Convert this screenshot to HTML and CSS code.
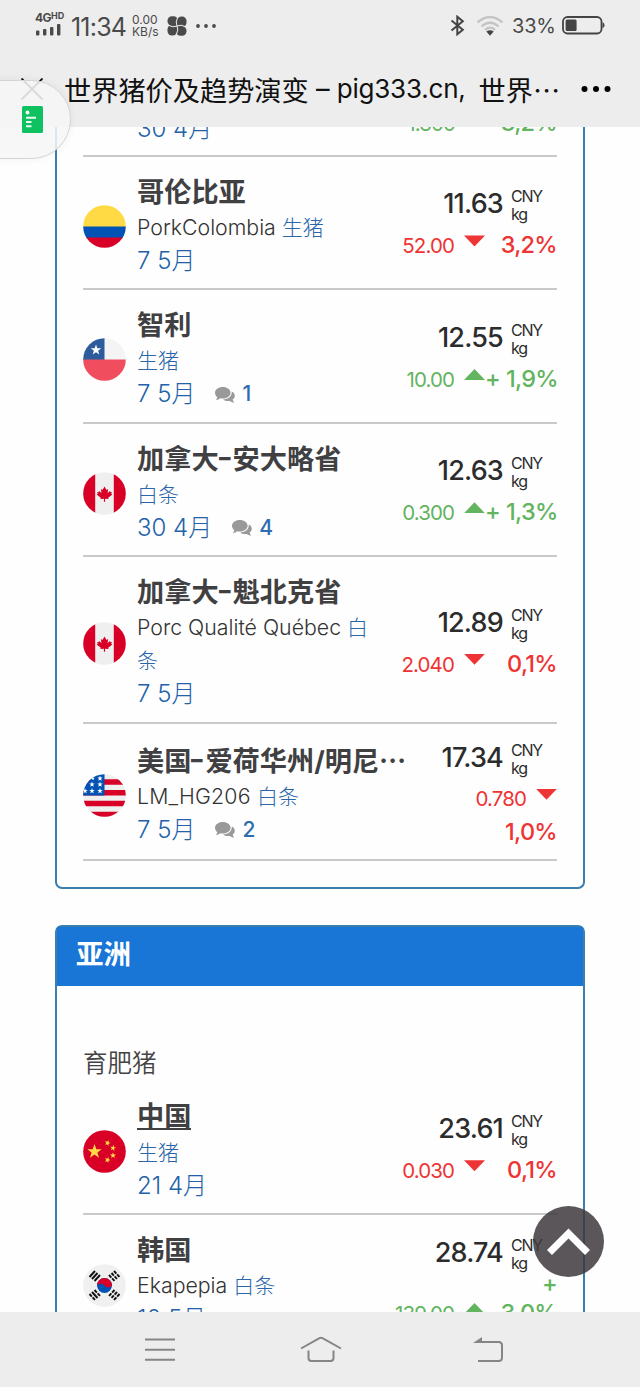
FILE: index.html
```html
<!DOCTYPE html>
<html lang="zh-CN">
<head>
<meta charset="utf-8">
<title>世界猪价及趋势演变</title>
<link rel="stylesheet" href="styles.css">
</head>
<body>
<svg class="defs" aria-hidden="true">
  <defs>
    <clipPath id="disc"><circle cx="21.5" cy="21.5" r="21.3"/></clipPath>
    <path id="star" d="M0-10 2.4-3.1 9.5-3.1 3.8 1.2 5.9 8.1 0 4-5.9 8.1-3.8 1.2-9.5-3.1-2.4-3.1Z"/>
    <symbol id="flag-ca" viewBox="0 0 43 43"><g clip-path="url(#disc)"><path fill="#efefef" d="M0 0h43v43H0z"/><path fill="#d80027" d="M0 0h12.2v43H0zM30.800 0H43v43H30.800z"/><path fill="#d80027" d="M21.500 14.500l2 3.400 1.700-.9-.7 4 2.500-2 .5 1.200 1.400-.3-.7 2 1.200.7-4.200 3.200.4 1.300-3.500-.4v3h-1.200v-3l-3.500.4.4-1.300-4.200-3.200 1.200-.7-.7-2 1.400.3.500-1.200 2.500 2-.7-4 1.700.9z"/></g></symbol>
    <symbol id="chat" viewBox="0 0 20 16"><path fill="#999" d="M7.800 0C12.200 0 15.600 2.600 15.600 5.800S12.200 11.600 7.800 11.600c-.9 0-1.800-.1-2.600-.3C4 12.300 2.500 12.900.8 12.900c.8-.8 1.300-1.700 1.500-2.700C.9 9.100 0 7.500 0 5.800 0 2.600 3.400 0 7.800 0z"/><path fill="#999" d="M16.800 4.600c1.900 1 3 2.500 3 4.200 0 1.500-.8 2.900-2.100 3.800.2 1.100.7 2 1.400 2.800-1.700 0-3.200-.6-4.300-1.500-2.500.5-5-.1-6.600-1.400 4.900-.1 8.900-3 8.600-7.900z"/></symbol>
  </defs>
</svg>
<div class="phone">
  <header class="top">
    <div class="status">
      <div class="signal"><span class="net">4G<small>HD</small></span>
        <svg width="27" height="12" viewBox="0 0 27 12" fill="#4a4a4a"><rect x="1" y="6.500" width="3.400" height="5" rx="1"/><rect x="8" y="5" width="3.400" height="6.500" rx="1"/><rect x="15" y="3" width="3.400" height="8.500" rx="1"/><rect x="22" y="0" width="3.400" height="11.500" rx="1"/></svg>
      </div>
      <span class="clock">11:34</span>
      <span class="speed">0.00<br>KB/s</span>
      <svg class="fan" width="20" height="20" viewBox="0 0 20 20"><g fill="#4a4a4a"><rect x=".5" y=".3" width="10.500" height="9.500" rx="4.500"/><rect x="10" y=".5" width="9.500" height="10.500" rx="4.500"/><rect x="9" y="10.200" width="10.500" height="9.500" rx="4.500"/><rect x=".5" y="9" width="9.500" height="10.500" rx="4.500"/><circle cx="10" cy="10" r="3"/></g><path fill="none" stroke="#ededed" stroke-width="1" d="M10 10Q8 6.500 10.800 1M10 10Q13.500 8 19 10.800M10 10Q12 13.500 9.200 19M10 10Q6.500 12 1 9.200"/></svg>
      <svg class="more-sm" width="22" height="6" viewBox="0 0 22 6" fill="#4a4a4a"><circle cx="3" cy="3" r="1.900"/><circle cx="11" cy="3" r="1.900"/><circle cx="19" cy="3" r="1.900"/></svg>
      <span class="spacer"></span>
      <svg width="15" height="21" viewBox="0 0 15 21" fill="none" stroke="#444" stroke-width="2"><path d="M1.500 5.500 12.800 14.800 7.300 19.300V1.700l5.500 4.500L1.500 15.500"/></svg>
      <svg class="wifi" width="28" height="20" viewBox="0 0 28 20" fill="none" stroke="#c4c4c4" stroke-width="2.300"><path d="M1.500 6.500Q14-4.500 26.500 6.500M5.500 10.500Q14 3 22.500 10.500M9 13.800Q14 9.500 19 13.800"/><path fill="#444" stroke="none" d="M10.300 15.500Q14 12.800 17.700 15.500L14 19.700z"/></svg>
      <span class="pct-batt">33%</span>
      <svg width="43" height="19" viewBox="0 0 43 19"><rect x="1" y="1" width="38.500" height="16.500" rx="4.500" fill="none" stroke="#444" stroke-width="1.800"/><rect x="3.600" y="3.500" width="11" height="11.500" rx="1.500" fill="#444"/><path fill="#444" d="M40.500 6.200q2 .5 2 3t-2 3z"/></svg>
    </div>
    <div class="titlebar">
      <svg class="close" width="22" height="22" viewBox="0 0 22 22" stroke="#111" stroke-width="1.900" fill="none"><path d="M.5.500l21 21M21.500.500l-21 21"/></svg>
      <div class="page-title"><span class="cjk">世界猪价及趋势演变</span><span class="dash">–</span><span class="site">pig333.cn,</span><span class="cjk">世界</span><span class="cjk dots">⋯</span></div>
      <svg class="more" width="30" height="8" viewBox="0 0 30 8"><circle cx="3.500" cy="4" r="3"/><circle cx="15" cy="4" r="3"/><circle cx="26.500" cy="4" r="3"/></svg>
    </div>
  </header>

  <main class="page">
    <section class="card card-first">
      <article class="row row-cut">
        <div class="date">30 4月</div>
        <div class="trend up"><span class="amount">1.300</span><span class="pct">3,2%</span></div>
      </article>

      <article class="row">
        <svg class="flag" viewBox="0 0 43 43"><g clip-path="url(#disc)"><path fill="#ffda44" d="M0 0h43v22H0z"/><path fill="#0052b4" d="M0 21.500h43v12H0z"/><path fill="#d80027" d="M0 32.500h43V43H0z"/></g></svg>
        <div class="info">
          <h3>哥伦比亚</h3>
          <p class="src">PorkColombia <a>生猪</a></p>
          <p class="date">7 5月</p>
        </div>
        <div class="quote">
          <div class="price"><b>11.63</b><span>CNY<br>kg</span></div>
          <div class="trend down"><span class="amount">52.00</span><i></i><span class="pct">3,2%</span></div>
        </div>
      </article>

      <article class="row">
        <svg class="flag" viewBox="0 0 43 43"><g clip-path="url(#disc)"><path fill="#f4f4f4" d="M0 0h43v22H0z"/><path fill="#2d5c9c" d="M0 0h21.500v22H0z"/><path fill="#f04e5e" d="M0 21.500h43V43H0z"/><use href="#star" fill="#fff" transform="translate(13 12) scale(.56)"/></g></svg>
        <div class="info">
          <h3>智利</h3>
          <p class="src"><a>生猪</a></p>
          <p class="date">7 5月<svg class="chat"><use href="#chat"/></svg><em>1</em></p>
        </div>
        <div class="quote">
          <div class="price"><b>12.55</b><span>CNY<br>kg</span></div>
          <div class="trend up"><span class="amount">10.00</span><i></i><span class="pct"><u>+</u>1,9%</span></div>
        </div>
      </article>

      <article class="row">
        <svg class="flag"><use href="#flag-ca"/></svg>
        <div class="info">
          <h3>加拿大<s>–</s>安大略省</h3>
          <p class="src"><a>白条</a></p>
          <p class="date">30 4月<svg class="chat"><use href="#chat"/></svg><em>4</em></p>
        </div>
        <div class="quote">
          <div class="price"><b>12.63</b><span>CNY<br>kg</span></div>
          <div class="trend up"><span class="amount">0.300</span><i></i><span class="pct"><u>+</u>1,3%</span></div>
        </div>
      </article>

      <article class="row row-wrap">
        <svg class="flag"><use href="#flag-ca"/></svg>
        <div class="info">
          <h3>加拿大<s>–</s>魁北克省</h3>
          <p class="src">Porc Qualité Québec <a>白<br>条</a></p>
          <p class="date">7 5月</p>
        </div>
        <div class="quote">
          <div class="price"><b>12.89</b><span>CNY<br>kg</span></div>
          <div class="trend down"><span class="amount">2.040</span><i></i><span class="pct">0,1%</span></div>
        </div>
      </article>

      <article class="row row-tall">
        <svg class="flag" viewBox="0 0 43 43"><g clip-path="url(#disc)"><path fill="#efefef" d="M0 0h43v43H0z"/><path fill="#d80027" d="M0 5.300h43v5.500H0zM0 16h43v5.500H0zM0 26.800h43v5.500H0zM0 37.800h43V43H0z"/><path fill="#0052b4" d="M0 0h21.500v21.500H0z"/><g fill="#fff"><use href="#star" transform="translate(17 4.500) scale(.29)"/><use href="#star" transform="translate(9 10.500) scale(.29)"/><use href="#star" transform="translate(17 10.500) scale(.29)"/><use href="#star" transform="translate(2 17) scale(.29)"/><use href="#star" transform="translate(9 17) scale(.29)"/><use href="#star" transform="translate(17 17) scale(.29)"/><use href="#star" transform="translate(10 4.500) scale(.2)"/></g></g></svg>
        <div class="info">
          <h3>美国<s>–</s>爱荷华州<q>/</q>明尼⋯</h3>
          <p class="src wide">LM_HG206 <a>白条</a></p>
          <p class="date">7 5月<svg class="chat"><use href="#chat"/></svg><em>2</em></p>
        </div>
        <div class="quote">
          <div class="price"><b>17.34</b><span>CNY<br>kg</span></div>
          <div class="trend down"><span class="amount">0.780</span><i></i></div>
          <div class="trend down"><span class="pct">1,0%</span></div>
        </div>
      </article>
    </section>

    <section class="card">
      <h2>亚洲</h2>
      <p class="group">育肥猪</p>
      <article class="row">
        <svg class="flag" viewBox="0 0 43 43"><g clip-path="url(#disc)"><path fill="#d80027" d="M0 0h43v43H0z"/><g fill="#ffda44"><use href="#star" transform="translate(11.500 21.500) scale(.76)"/><use href="#star" transform="translate(24.500 13) rotate(20) scale(.32)"/><use href="#star" transform="translate(30 18) rotate(10) scale(.32)"/><use href="#star" transform="translate(30 25.500) scale(.32)"/><use href="#star" transform="translate(24.500 30) rotate(20) scale(.32)"/></g></g></svg>
        <div class="info">
          <h3><span class="active">中国</span></h3>
          <p class="src"><a>生猪</a></p>
          <p class="date">21 4月</p>
        </div>
        <div class="quote">
          <div class="price"><b>23.61</b><span>CNY<br>kg</span></div>
          <div class="trend down"><span class="amount">0.030</span><i></i><span class="pct">0,1%</span></div>
        </div>
      </article>
      <article class="row row-plus">
        <svg class="flag" viewBox="0 0 43 43"><circle cx="21.500" cy="21.500" r="21.300" fill="#f0f0f0"/><circle cx="21.500" cy="21.500" r="7.500" fill="#0052b4"/><path fill="#d80027" d="M14 21.500a7.500 7.500 0 0 1 15 0c-1.500 2.500-5.500 2.500-7.500 0s-6-2-7.500 0z"/><g fill="none" stroke="#111" stroke-width="1.900"><path d="M6.500 13l5.500-6M9 15l5.500-6M11.500 17l5.500-6"/><path d="M31 7l5.500 6M28.500 9l5.500 6M26 11l5.500 6" stroke-dasharray="3.500 1.100"/><path d="M6.500 30l5.500 6M11.500 26l5.500 6" stroke-dasharray="3.500 1.100"/><path d="M9 28l5.500 6"/><path d="M36.500 30l-5.500 6M34 28l-5.500 6M31.500 26l-5.500 6" stroke-dasharray="3.500 1.100"/></g></svg>
        <div class="info">
          <h3>韩国</h3>
          <p class="src">Ekapepia <a>白条</a></p>
          <p class="date">10 5月</p>
        </div>
        <div class="quote">
          <div class="price"><b>28.74</b><span>CNY<br>kg</span></div>
          <div class="trend up plus-line"><span class="pct">+</span></div>
          <div class="trend up last-line"><span class="amount">139.00</span><i></i><span class="pct">3,0%</span></div>
        </div>
      </article>
    </section>
  </main>

  <nav class="navbar">
    <svg width="30" height="26" viewBox="0 0 30 26" fill="none" stroke="#858585" stroke-width="2"><path d="M0 2.500h30M0 12.700h30M0 22.800h30"/></svg>
    <svg class="home" width="42" height="27" viewBox="0 0 42 27" fill="none" stroke="#858585" stroke-width="2"><path d="M1 12.500 19.500 2.200q1.500-.8 3 0L41 12.500M8.500 14.500v7.500q0 3 3 3h19q3 0 3-3v-7.500"/></svg>
    <svg width="31" height="27" viewBox="0 0 31 27" fill="none" stroke="#858585" stroke-width="2"><path d="M5 25h20.500q3.500 0 3.500-3.500v-12Q29 6 25.500 6H3"/><path fill="#858585" stroke="none" d="M0 7 9 1v6z"/></svg>
  </nav>

  <div class="float-tab"><svg width="21" height="27" viewBox="0 0 21 27"><rect width="21" height="27" rx="1.500" fill="#0fc160"/><circle cx="5.500" cy="6.500" r="1.900" fill="#fff"/><path stroke="#e9faef" stroke-width="1.900" d="M4 11.800h10M4 16h5.500M4 20.200h5.500"/></svg></div>
  <div class="to-top"><svg width="43" height="28" viewBox="0 0 43 28" fill="none" stroke="#fff" stroke-width="7"><path d="M2.500 24.500 21.500 5.500l19 19"/></svg></div>
</div>
</body>
</html>
```
FILE: styles.css
```css
* { box-sizing: border-box; margin: 0; padding: 0; }

body {
  background: #fefefe;
  font-family: Inter, "Noto Sans CJK SC", sans-serif;
  color: #2c2c2c;
}

.defs { position: absolute; width: 0; height: 0; }

.phone {
  position: relative;
  display: flex;
  flex-direction: column;
  width: 640px;
  height: 1387px;
  overflow: hidden;
}

/* status bar and browser title */
.top { height: 127px; flex: none; background: #ededed; }

.status {
  display: flex;
  align-items: center;
  height: 51px;
  padding: 0 35px 0 35px;
  color: #4a4a4a;
}
.signal { display: flex; flex-direction: column; width: 28px; margin-top: -3px; }
.net { display: flex; align-items: flex-start; font-size: 12px; font-weight: 700; line-height: 11px; letter-spacing: -.6px; }
.net small { font-size: 9px; line-height: 7px; letter-spacing: 0; }
.signal svg { margin-top: 1px; }
.clock { width: 60px; margin-left: 8px; font-size: 25px; letter-spacing: -.8px; white-space: nowrap; padding-top: 2px; }
.speed { width: 30px; margin-left: 1px; font-size: 12px; line-height: 12px; }
.fan { margin-left: 5px; }
.more-sm { margin-left: 8px; }
.spacer { flex: 1; }
.wifi { margin-left: 11px; margin-right: 8px; }
.pct-batt { width: 43px; font-size: 20px; letter-spacing: -.2px; margin-right: 7px; }

.titlebar { display: flex; align-items: center; height: 76px; padding: 0 29px 0 21px; }
.close, .more { flex: none; }
.page-title {
  display: flex;
  align-items: center;
  width: 517px;
  padding-left: 21px;
  font-size: 27.2px;
  line-height: 40px;
  color: #111;
  white-space: nowrap;
}
.page-title .cjk { font-family: "Noto Sans CJK SC", sans-serif; }
.dash { width: 28px; text-align: center; }
.site { width: 142px; font-size: 26px; letter-spacing: -.2px; }
.dots { width: 27px; }
.more { margin-left: 20.500px; margin-top: -1px; }

/* scrolled page */
.page { height: 1185px; flex: none; overflow: hidden; padding: 0 55px; }

.card {
  border: 2px solid #3a7fae;
  border-radius: 7px;
  padding: 0 26px;
  height: 500px;
}
.card-first {
  border-top: 0;
  border-radius: 0 0 7px 7px;
  height: 762px;
  margin-bottom: 36px;
}
.card h2 {
  height: 58.500px;
  margin: 0 -26px;
  padding-left: 19px;
  background: #1976d7;
  color: #fff;
  font-size: 27.5px;
  line-height: 54px;
}
.group { height: 96px; padding-top: 59px; font-size: 24.5px; line-height: 36px; color: #444; font-weight: 350; }

.row {
  display: flex;
  align-items: center;
  height: 133.4px;
  border-bottom: 2px solid #c9c9c9;
}
.row-cut { height: 29.800px; align-items: flex-end; justify-content: space-between; overflow: hidden; }
.row-cut .date { margin-left: 54px; margin-bottom: 10px; }
.row-cut .trend { margin-bottom: 15px; gap: 30px; }
.row-cut .pct { width: 72px; }
.row-wrap { height: 167.4px; }
.row-tall { height: 136.800px; }
.row-plus { height: 150px; align-items: flex-start; }

.flag { flex: none; width: 43px; height: 43px; margin-top: 8px; }
.row-tall .flag { margin-top: 8px; }
.row-plus .flag { margin-top: 49px; }
.info { flex: none; align-self: flex-start; width: 282px; margin: 17px 0 0 11px; white-space: nowrap; }
.row-tall .info { margin-top: 18.500px; }
.info h3 { font-size: 27.2px; line-height: 38px; height: 38px; color: #404042; font-weight: 700; }
.info h3 s { display: inline-block; width: 14px; text-decoration: none; transform: translateY(-2px) scaleX(.85); transform-origin: left; }
.info h3 q { quotes: none; }
.active { border-bottom: 2px solid #404042; display: inline-block; height: 31px; line-height: 36px; vertical-align: top; }
.src { margin-top: -1px; font-size: 21.3px; line-height: 33.500px; font-weight: 300; color: #333; }
.src.wide { letter-spacing: .2px; }
.src a { color: #2b66ab; font-size: 21px; }
.date { display: flex; align-items: center; font-size: 24px; line-height: 33px; margin-top: -.5px; font-weight: 300; color: #2361a9; }
.date em { font-style: normal; font-size: 21px; font-weight: 500; color: #2c6cb0; }
.chat { width: 20px; height: 16px; margin: 2px 7px 0 20px; }

.quote { flex: none; width: 137px; margin-bottom: 4px; margin-left: auto; display: flex; flex-direction: column; align-items: flex-end; }
.row-wrap .quote { margin-bottom: 2px; }
.row-tall .quote { margin-bottom: 3px; }
.row-plus .quote { margin-top: 12px; }
.price { display: flex; justify-content: flex-end; align-items: center; height: 51px; }
.price b { font-size: 27px; font-weight: 450; letter-spacing: -.8px; }
.price span { width: 46px; margin-left: 8px; font-size: 16px; line-height: 18px; letter-spacing: -1.2px; padding-top: 3px; }
.trend { display: flex; justify-content: flex-end; align-items: baseline; height: 33px; line-height: 32px; white-space: nowrap; }
.plus-line { margin-top: -10px; }
.last-line { margin-top: -4px; }
.trend .amount { font-size: 20.500px; letter-spacing: -.9px; }
.trend i {
  width: 21px;
  height: 11px;
  margin-left: 10px;
  align-self: flex-start;
  margin-top: 6px;
  background: currentColor;
}
.trend .pct { width: 72px; font-size: 23.500px; font-weight: 450; letter-spacing: -.7px; text-align: right; }
.pct u { text-decoration: none; margin-right: 6px; }
.down { color: #ee3434; }
.up { color: #62b45e; }
.down i { clip-path: polygon(0 0, 100% 0, 50% 100%); }
.up i { clip-path: polygon(0 100%, 100% 100%, 50% 0); }

/* system navigation */
.navbar {
  display: flex;
  align-items: center;
  justify-content: space-between;
  flex: none;
  height: 75px;
  padding: 0 136px 0 145px;
  background: #ededed;
}
.home { margin-right: 7px; }

/* overlays */
.float-tab {
  position: absolute;
  left: -10px;
  top: 80px;
  width: 81px;
  height: 79px;
  display: flex;
  align-items: center;
  padding-left: 31px;
  border: 1.500px solid #d4d4d4;
  border-radius: 0 40px 40px 0;
  background: rgba(246, 246, 246, .87);
  box-shadow: 0 0 8px rgba(0, 0, 0, .06);
}
.to-top {
  position: absolute;
  left: 533px;
  top: 1206px;
  width: 71px;
  height: 71px;
  display: flex;
  align-items: center;
  justify-content: center;
  border-radius: 50%;
  background: rgba(62, 56, 60, .85);
}
```
